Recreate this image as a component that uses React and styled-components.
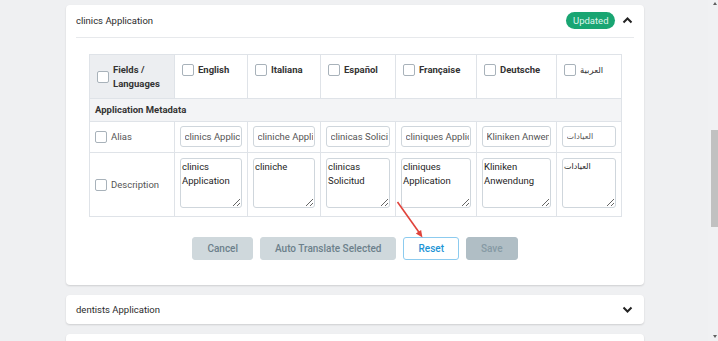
import React from 'react'
import styled, { createGlobalStyle } from 'styled-components'

const languages = [
  { key: 'en', label: 'English', alias: 'clinics Application', desc: 'clinics Application' },
  { key: 'it', label: 'Italiana', alias: 'cliniche Applicazione', desc: 'cliniche' },
  { key: 'es', label: 'Español', alias: 'clinicas Solicitud', desc: 'clinicas Solicitud' },
  { key: 'fr', label: 'Française', alias: 'cliniques Application', desc: 'cliniques Application' },
  { key: 'de', label: 'Deutsche', alias: 'Kliniken Anwendung', desc: 'Kliniken Anwendung' },
  { key: 'ar', label: 'العربية', alias: 'العيادات', desc: 'العيادات' },
]

const colWidths = [85, 73, 73, 75, 81, 80, 65]

const GlobalStyle = createGlobalStyle`
  html, body {
    margin: 0;
    padding: 0;
    background: #eff0f2;
    overflow: hidden;
    font-family: Roboto, 'Noto Sans', 'DejaVu Sans', sans-serif;
  }
  * { box-sizing: border-box; }
`

const Chevron = ({ up }) => (
  <svg width='11' height='8' viewBox='0 0 11 8'>
    <polyline
      points={up ? '1.5,6.5 5.5,2.5 9.5,6.5' : '1.5,1.5 5.5,5.5 9.5,1.5'}
      fill='none'
      stroke='#222'
      strokeWidth='2'
    />
  </svg>
)

const App = () => {
  return (
    <>
      <GlobalStyle />
      <Viewport>
        <Main>
          <Card>
            <CardHeader $divided>
              <Title>clinics Application</Title>
              <HeaderRight>
                <Badge>Updated</Badge>
                <Chevron up />
              </HeaderRight>
            </CardHeader>
            <CardBody>
              <Table>
                <colgroup>
                  {colWidths.map((w, i) => (
                    <col key={i} style={{ width: w }} />
                  ))}
                </colgroup>
                <thead>
                  <tr>
                    <HeadCell $muted>
                      <HeadLabel>
                        <Checkbox />
                        <span>Fields / Languages</span>
                      </HeadLabel>
                    </HeadCell>
                    {languages.map((l) => (
                      <HeadCell key={l.key}>
                        <HeadLabel $arabic={l.key === 'ar'}>
                          <Checkbox />
                          <span>{l.label}</span>
                        </HeadLabel>
                      </HeadCell>
                    ))}
                  </tr>
                </thead>
                <tbody>
                  <tr>
                    <SectionCell colSpan={7}>Application Metadata</SectionCell>
                  </tr>
                  <tr>
                    <FieldCell>
                      <FieldLabel>
                        <Checkbox />
                        <span>Alias</span>
                      </FieldLabel>
                    </FieldCell>
                    {languages.map((l) => (
                      <ValueCell key={l.key}>
                        <TextInput defaultValue={l.alias} $arabic={l.key === 'ar'} />
                      </ValueCell>
                    ))}
                  </tr>
                  <tr>
                    <FieldCell>
                      <FieldLabel>
                        <Checkbox />
                        <span>Description</span>
                      </FieldLabel>
                    </FieldCell>
                    {languages.map((l) => (
                      <ValueCell key={l.key} $tall>
                        <TextArea defaultValue={l.desc} $arabic={l.key === 'ar'} spellCheck={false} />
                      </ValueCell>
                    ))}
                  </tr>
                </tbody>
              </Table>
              <Actions>
                <Button>Cancel</Button>
                <Button>Auto Translate Selected</Button>
                <Button $variant='outline'>Reset</Button>
                <Button $variant='dark'>Save</Button>
              </Actions>
            </CardBody>
          </Card>
          <Card>
            <CardHeader>
              <Title>dentists Application</Title>
              <HeaderRight>
                <Chevron />
              </HeaderRight>
            </CardHeader>
          </Card>
          <Card>
            <CardHeader>
              <Title />
              <HeaderRight>
                <Chevron />
              </HeaderRight>
            </CardHeader>
          </Card>
        </Main>
        <ScrollTrack>
          <ScrollArrow $dir='up' />
          <ScrollThumb />
          <ScrollArrow $dir='down' />
        </ScrollTrack>
        <Pointer width='718' height='341' viewBox='0 0 718 341'>
          <line x1='397.5' y1='202' x2='419.5' y2='233' stroke='#e0433b' strokeWidth='1.6' />
          <polygon points='422.5,237.5 415.8,233.6 421.1,229.9' fill='#e0433b' />
        </Pointer>
      </Viewport>
    </>
  )
}

const Viewport = styled.div`
  position: relative;
  display: flex;
  width: 718px;
  height: 341px;
  overflow: hidden;
`

const Main = styled.main`
  flex: 1;
  display: flex;
  flex-direction: column;
  align-items: center;
  gap: 10px;
  padding: 5px 0 0 2px;
`

const Card = styled.section`
  width: 578px;
  flex: none;
  background: #fff;
  border-radius: 4px;
  box-shadow: 0 1px 2px rgba(0, 0, 0, 0.14);
  padding: 0 10px;
`

const CardHeader = styled.header`
  display: flex;
  align-items: center;
  justify-content: space-between;
  height: ${(p) => (p.$divided ? '33px' : '29px')};
  padding-bottom: ${(p) => (p.$divided ? '2px' : '0')};
  border-bottom: ${(p) => (p.$divided ? '1px solid #e7e9ec' : 'none')};
`

const Title = styled.h3`
  margin: 0;
  font-size: 9.5px;
  font-weight: 400;
  color: #2b2b2b;
`

const HeaderRight = styled.div`
  display: flex;
  align-items: center;
  gap: 7px;
  padding-right: 1px;
  svg {
    display: block;
  }
`

const Badge = styled.span`
  display: inline-flex;
  align-items: center;
  height: 17px;
  padding: 0 6.5px;
  border-radius: 9px;
  background: #19a572;
  color: #dff5ec;
  font-size: 9.5px;
`

const CardBody = styled.div`
  padding: 16px 13px 25px;
`

const Table = styled.table`
  width: 532px;
  table-layout: fixed;
  border-collapse: collapse;
  font-size: 9.5px;
  color: #333;
`

const cellBorder = '1px solid #dfe3e8'

const HeadCell = styled.th`
  border: ${cellBorder};
  padding: 8px 7px 7px;
  vertical-align: top;
  text-align: left;
  background: ${(p) => (p.$muted ? '#eceef1' : '#fff')};
`

const HeadLabel = styled.label`
  display: flex;
  align-items: center;
  gap: 4px;
  font-weight: ${(p) => (p.$arabic ? 400 : 700)};
  font-size: ${(p) => (p.$arabic ? '8.5px' : '9.5px')};
  line-height: 14px;
  color: #333;
`

const Checkbox = styled.input.attrs({ type: 'checkbox' })`
  appearance: none;
  flex: none;
  width: 12px;
  height: 12px;
  margin: 0;
  background: #fff;
  border: 1.5px solid #a8b2ba;
  border-radius: 2px;
`

const SectionCell = styled.td`
  border: ${cellBorder};
  background: #f3f4f6;
  padding: 4px 5px 5px;
  font-weight: 700;
  line-height: 13px;
  color: #333;
`

const FieldCell = styled.td`
  border: ${cellBorder};
  padding: 5px 5px;
  vertical-align: middle;
`

const FieldLabel = styled.label`
  display: flex;
  align-items: center;
  gap: 4px;
  color: #555;
  line-height: 14px;
`

const ValueCell = styled.td`
  border: ${cellBorder};
  padding: ${(p) => (p.$tall ? '5px 5px 8px' : '4px 5px 5px')};
  vertical-align: top;
`

const fieldBase = `
  display: block;
  width: 100%;
  margin: 0;
  border: 1px solid #cfd6dc;
  border-radius: 3px;
  background: #fff;
  font-family: Roboto, 'DejaVu Sans', sans-serif;
  outline: none;
`

const TextInput = styled.input`
  ${fieldBase}
  height: 21px;
  padding: 0 1px 0 3.5px;
  font-size: ${(p) => (p.$arabic ? '8px' : '9.5px')};
  color: #555;
`

const TextArea = styled.textarea`
  ${fieldBase}
  height: 50px;
  padding: 1px 1px;
  font-size: ${(p) => (p.$arabic ? '8px' : '9.5px')};
  line-height: 14px;
  color: #1e1e1e;
`

const Actions = styled.div`
  display: flex;
  justify-content: center;
  gap: 7px;
  margin-top: 20px;
`

const buttonColors = {
  default: { bg: '#cfd8dc', border: '#cfd8dc', color: '#6c808b' },
  outline: { bg: '#fff', border: '#8ccbef', color: '#1e94d6' },
  dark: { bg: '#b0bec5', border: '#b0bec5', color: '#869aa4' },
}

const Button = styled.button`
  height: 23px;
  padding: 0 14px;
  border-radius: 3px;
  border: 1px solid ${(p) => buttonColors[p.$variant || 'default'].border};
  background: ${(p) => buttonColors[p.$variant || 'default'].bg};
  color: ${(p) => buttonColors[p.$variant || 'default'].color};
  font-family: Roboto, sans-serif;
  font-size: 10px;
  font-weight: 500;
  cursor: pointer;
`

const ScrollTrack = styled.div`
  width: 10px;
  flex: none;
  display: flex;
  flex-direction: column;
  align-items: flex-end;
  padding: 2px 0 3px;
  background: #f0f1f3;
`

const ScrollArrow = styled.span`
  width: 0;
  height: 0;
  margin-right: 1px;
  border-left: 2.5px solid transparent;
  border-right: 2.5px solid transparent;
  ${(p) =>
    p.$dir === 'up'
      ? 'border-bottom: 3px solid #606060;'
      : 'border-top: 3px solid #606060; margin-top: auto;'}
`

const ScrollThumb = styled.div`
  width: 7px;
  height: 97px;
  margin-top: 125px;
  background: #c1c1c1;
`

const Pointer = styled.svg`
  position: absolute;
  left: 0;
  top: 0;
  pointer-events: none;
`

export default App
